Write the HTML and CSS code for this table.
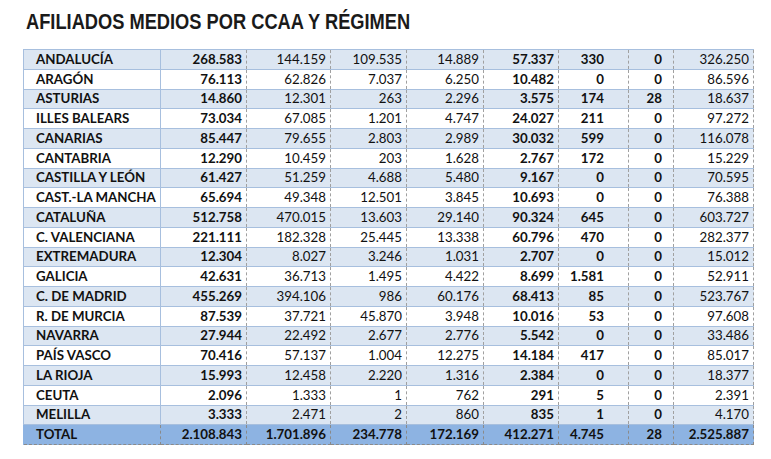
FILE: index.html
```html
<!DOCTYPE html>
<html lang="es">
<head>
<meta charset="utf-8">
<title>Afiliados medios por CCAA y régimen</title>
<link rel="stylesheet" href="styles.css">
</head>
<body>
<div class="page">
  <h1 class="title">AFILIADOS MEDIOS POR CCAA Y RÉGIMEN</h1>
  <table class="grid">
    <colgroup>
      <col class="c-name"><col class="c1"><col class="c2"><col class="c3"><col class="c4"><col class="c5"><col class="c6"><col class="c7"><col class="c8">
    </colgroup>
    <tbody>
      <tr class="alt"><td>ANDALUCÍA</td><td>268.583</td><td>144.159</td><td>109.535</td><td>14.889</td><td>57.337</td><td>330</td><td>0</td><td>326.250</td></tr>
      <tr><td>ARAGÓN</td><td>76.113</td><td>62.826</td><td>7.037</td><td>6.250</td><td>10.482</td><td>0</td><td>0</td><td>86.596</td></tr>
      <tr class="alt"><td>ASTURIAS</td><td>14.860</td><td>12.301</td><td>263</td><td>2.296</td><td>3.575</td><td>174</td><td>28</td><td>18.637</td></tr>
      <tr><td>ILLES BALEARS</td><td>73.034</td><td>67.085</td><td>1.201</td><td>4.747</td><td>24.027</td><td>211</td><td>0</td><td>97.272</td></tr>
      <tr class="alt"><td>CANARIAS</td><td>85.447</td><td>79.655</td><td>2.803</td><td>2.989</td><td>30.032</td><td>599</td><td>0</td><td>116.078</td></tr>
      <tr><td>CANTABRIA</td><td>12.290</td><td>10.459</td><td>203</td><td>1.628</td><td>2.767</td><td>172</td><td>0</td><td>15.229</td></tr>
      <tr class="alt"><td>CASTILLA Y LEÓN</td><td>61.427</td><td>51.259</td><td>4.688</td><td>5.480</td><td>9.167</td><td>0</td><td>0</td><td>70.595</td></tr>
      <tr><td>CAST.-LA MANCHA</td><td>65.694</td><td>49.348</td><td>12.501</td><td>3.845</td><td>10.693</td><td>0</td><td>0</td><td>76.388</td></tr>
      <tr class="alt"><td>CATALUÑA</td><td>512.758</td><td>470.015</td><td>13.603</td><td>29.140</td><td>90.324</td><td>645</td><td>0</td><td>603.727</td></tr>
      <tr><td>C. VALENCIANA</td><td>221.111</td><td>182.328</td><td>25.445</td><td>13.338</td><td>60.796</td><td>470</td><td>0</td><td>282.377</td></tr>
      <tr class="alt"><td>EXTREMADURA</td><td>12.304</td><td>8.027</td><td>3.246</td><td>1.031</td><td>2.707</td><td>0</td><td>0</td><td>15.012</td></tr>
      <tr><td>GALICIA</td><td>42.631</td><td>36.713</td><td>1.495</td><td>4.422</td><td>8.699</td><td>1.581</td><td>0</td><td>52.911</td></tr>
      <tr class="alt"><td>C. DE MADRID</td><td>455.269</td><td>394.106</td><td>986</td><td>60.176</td><td>68.413</td><td>85</td><td>0</td><td>523.767</td></tr>
      <tr><td>R. DE MURCIA</td><td>87.539</td><td>37.721</td><td>45.870</td><td>3.948</td><td>10.016</td><td>53</td><td>0</td><td>97.608</td></tr>
      <tr class="alt"><td>NAVARRA</td><td>27.944</td><td>22.492</td><td>2.677</td><td>2.776</td><td>5.542</td><td>0</td><td>0</td><td>33.486</td></tr>
      <tr><td>PAÍS VASCO</td><td>70.416</td><td>57.137</td><td>1.004</td><td>12.275</td><td>14.184</td><td>417</td><td>0</td><td>85.017</td></tr>
      <tr class="alt"><td>LA RIOJA</td><td>15.993</td><td>12.458</td><td>2.220</td><td>1.316</td><td>2.384</td><td>0</td><td>0</td><td>18.377</td></tr>
      <tr><td>CEUTA</td><td>2.096</td><td>1.333</td><td>1</td><td>762</td><td>291</td><td>5</td><td>0</td><td>2.391</td></tr>
      <tr class="alt"><td>MELILLA</td><td>3.333</td><td>2.471</td><td>2</td><td>860</td><td>835</td><td>1</td><td>0</td><td>4.170</td></tr>
      <tr class="total"><td>TOTAL</td><td>2.108.843</td><td>1.701.896</td><td>234.778</td><td>172.169</td><td>412.271</td><td>4.745</td><td>28</td><td>2.525.887</td></tr>
    </tbody>
  </table>
</div>
</body>
</html>
```
FILE: styles.css
```css
html, body {
  margin: 0;
  padding: 0;
  background: #ffffff;
}

.page {
  padding: 9px 0 0 23px;
}

.title {
  margin: 0 0 14px 3px;
  font-family: "Liberation Sans", Arial, sans-serif;
  font-weight: bold;
  font-size: 22px;
  line-height: 26px;
  color: #1a1a1a;
  transform: scaleX(0.83);
  transform-origin: left center;
  white-space: nowrap;
}

.grid {
  border-collapse: collapse;
  table-layout: fixed;
  width: 730px;
  font-family: Lato, "Open Sans", sans-serif;
  font-size: 13.3px;
  color: #111111;
}

.c-name { width: 137px; }
.c1 { width: 86px; }
.c2 { width: 84px; }
.c3 { width: 76px; }
.c4 { width: 77px; }
.c5 { width: 75px; }
.c6 { width: 70px; }
.c7 { width: 45px; }
.c8 { width: 80px; }

.grid tr {
  height: 19.75px;
}

.grid td {
  padding: 0 4px 0 4px;
  text-align: right;
  white-space: nowrap;
  border-top: 1px solid #a7bfde;
  border-bottom: 1px solid #a7bfde;
  border-left: 1px dashed #a0a0a0;
  border-right: 1px dashed #a0a0a0;
  line-height: 17px;
}

.grid td:first-child {
  text-align: left;
  padding-left: 12px;
  font-weight: bold;
  border-left: 1px solid #a7bfde;
  border-right: 1px solid #a7bfde;
}

.grid td:nth-child(2),
.grid td:nth-child(6),
.grid td:nth-child(7),
.grid td:nth-child(8) {
  font-weight: bold;
}

.grid td:nth-child(7) {
  padding-right: 24px;
}

.grid td:nth-child(8) {
  padding-right: 11px;
}

.grid tr.alt td {
  background: #dce6f2;
}

.grid tr.total td {
  background: #8db3e2;
  font-weight: bold;
  border-top: 1px dashed #8a8a8a;
  border-bottom: 1px dashed #8a8a8a;
  border-left: 1px dashed #8a8a8a;
  border-right: 1px dashed #8a8a8a;
}

.grid tr.total td:first-child {
  border-left: 1px solid #8db3e2;
  border-right: 1px dashed #8a8a8a;
}
```
